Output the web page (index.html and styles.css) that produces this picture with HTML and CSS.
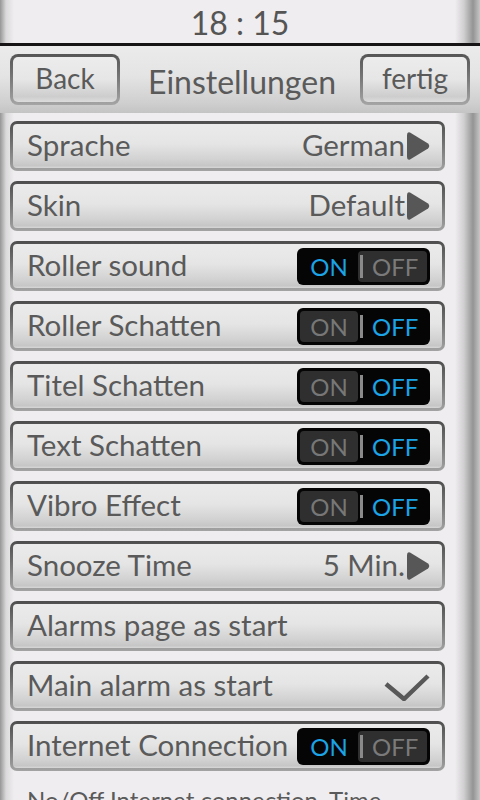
FILE: index.html
```html
<!DOCTYPE html>
<html>
<head>
<meta charset="utf-8">
<link rel="stylesheet" href="styles.css">
</head>
<body>
<div class="screen">
  <header class="status">18 : 15</header>
  <nav class="navbar">
    <button class="navbtn">Back</button>
    <div class="title">Einstellungen</div>
    <button class="navbtn">fertig</button>
  </nav>
  <main class="list">
    <div class="row"><span class="label">Sprache</span><span class="value">German</span><svg class="arrow" width="24" height="30" viewBox="0 0 24 30"><path d="M4 1.5 Q1 0.5 1 4 V26 Q1 29.5 4 28.5 L22 17.5 Q24.5 15 22 12.5 Z" fill="#575757"/></svg></div>
    <div class="row"><span class="label">Skin</span><span class="value">Default</span><svg class="arrow" width="24" height="30" viewBox="0 0 24 30"><path d="M4 1.5 Q1 0.5 1 4 V26 Q1 29.5 4 28.5 L22 17.5 Q24.5 15 22 12.5 Z" fill="#575757"/></svg></div>
    <div class="row"><span class="label">Roller sound</span><div class="toggle is-on"><span class="half on">ON</span><span class="half off"><i class="sep"></i>OFF</span></div></div>
    <div class="row"><span class="label">Roller Schatten</span><div class="toggle is-off"><span class="half on">ON</span><span class="half off"><i class="sep"></i>OFF</span></div></div>
    <div class="row"><span class="label">Titel Schatten</span><div class="toggle is-off"><span class="half on">ON</span><span class="half off"><i class="sep"></i>OFF</span></div></div>
    <div class="row"><span class="label">Text Schatten</span><div class="toggle is-off"><span class="half on">ON</span><span class="half off"><i class="sep"></i>OFF</span></div></div>
    <div class="row"><span class="label">Vibro Effect</span><div class="toggle is-off"><span class="half on">ON</span><span class="half off"><i class="sep"></i>OFF</span></div></div>
    <div class="row"><span class="label">Snooze Time</span><span class="value">5 Min.</span><svg class="arrow" width="24" height="30" viewBox="0 0 24 30"><path d="M4 1.5 Q1 0.5 1 4 V26 Q1 29.5 4 28.5 L22 17.5 Q24.5 15 22 12.5 Z" fill="#575757"/></svg></div>
    <div class="row"><span class="label">Alarms page as start</span></div>
    <div class="row"><span class="label">Main alarm as start</span><svg class="check" width="46" height="28" viewBox="0 0 46 28"><polyline points="2,11 20,26 44,3" fill="none" stroke="#585858" stroke-width="4.5"/></svg></div>
    <div class="row"><span class="label">Internet Connection</span><div class="toggle is-on"><span class="half on">ON</span><span class="half off"><i class="sep"></i>OFF</span></div></div>
    <p class="note">No/Off Internet connection. Time sync and weather need it.</p>
  </main>
</div>
</body>
</html>
```
FILE: styles.css
```css
html, body {
  margin: 0;
  padding: 0;
}
body {
  width: 480px;
  height: 800px;
  overflow: hidden;
  font-family: Lato, "Open Sans", sans-serif;
  color: #5a5a5a;
}
.screen {
  width: 480px;
  height: 800px;
  overflow: hidden;
  display: flex;
  flex-direction: column;
  background:
    linear-gradient(to right, rgba(120,120,120,0.75) 0px, rgba(180,180,180,0.35) 6px, rgba(200,200,200,0) 14px, rgba(200,200,200,0) 455px, rgba(150,150,150,0.35) 464px, rgba(110,110,110,0.7) 473px, rgba(160,160,160,0.5) 480px),
    #efedef;
}
.status {
  flex: none;
  display: flex;
  align-items: center;
  justify-content: center;
  font-size: 32px;
  color: #555;
  padding-top: 1px;
  box-sizing: border-box;
  border-bottom: 3px solid #171415;
  height: 46px;
}
.navbar {
  height: 67px;
  flex: none;
  box-sizing: border-box;
  display: flex;
  align-items: flex-start;
  justify-content: space-between;
  padding: 8px 10px 0 10px;
  background: linear-gradient(to bottom, #ebebeb 0%, #e4e4e4 45%, #cfcfcf 85%, #c4c4c4 100%);
}
.navbtn {
  width: 110px;
  height: 51px;
  box-sizing: border-box;
  border: 3px solid transparent;
  border-radius: 8px;
  background:
    linear-gradient(to bottom, #ececec 0%, #e6e6e6 50%, #cdcdcd 88%, #dcdcdc 100%) padding-box,
    linear-gradient(to bottom, #555 0%, #7a7a7a 50%, #a5a5a5 100%) border-box;
  font-family: Lato, "Open Sans", sans-serif;
  font-size: 28px;
  color: #5a5a5a;
  padding: 0 0 4px 0;
  line-height: 1;
}
.title {
  font-size: 32px;
  color: #5a5a5a;
  padding-top: 8px;
  margin-left: 4px;
}
.list {
  flex: 1;
  display: flex;
  flex-direction: column;
  gap: 10px;
  padding: 8px 35px 0 10px;
}
.row {
  height: 50px;
  flex: none;
  box-sizing: border-box;
  border: 3px solid transparent;
  border-radius: 7px;
  background:
    linear-gradient(to bottom, #ebebeb 0%, #e5e5e5 45%, #d2d2d2 80%, #c6c6c6 95%, #d8d8d8 100%) padding-box,
    linear-gradient(to bottom, #4e4e4e 0%, #6e6e6e 40%, #a3a3a3 100%) border-box;
  display: flex;
  align-items: center;
  padding: 0 12px 2px 14px;
  font-size: 29.5px;
}
.label {
  flex: 1;
  white-space: nowrap;
  line-height: 1;
}
.value {
  line-height: 1;
  margin-right: 1px;
}
.arrow {
  display: block;
  flex: none;
  margin-top: 2px;
}
.check {
  display: block;
  flex: none;
  margin-top: 3px;
}
.toggle {
  width: 133px;
  height: 37px;
  flex: none;
  box-sizing: border-box;
  background: #050505;
  border-radius: 6px;
  padding: 3px;
  display: flex;
  font-size: 24px;
  line-height: 31px;
  margin-top: 2px;
}
.half {
  display: flex;
  align-items: center;
  justify-content: center;
  border-radius: 4px;
}
.half.on {
  width: 58px;
}
.half.off {
  flex: 1;
  justify-content: flex-start;
  gap: 9px;
  padding-left: 2px;
}
.sep {
  display: block;
  width: 3px;
  height: 23px;
  background: #8a8a8a;
}
.is-on .on { color: #1ba3e6; }
.is-on .off { color: #7a7a7a; background: #2f2f2f; }
.is-off .on { color: #777; background: #2f2f2f; }
.is-off .off { color: #1ba3e6; }
.note {
  margin: 4px 0 0 17px;
  width: 380px;
  font-size: 24px;
  color: #5a5a5a;
}
```
